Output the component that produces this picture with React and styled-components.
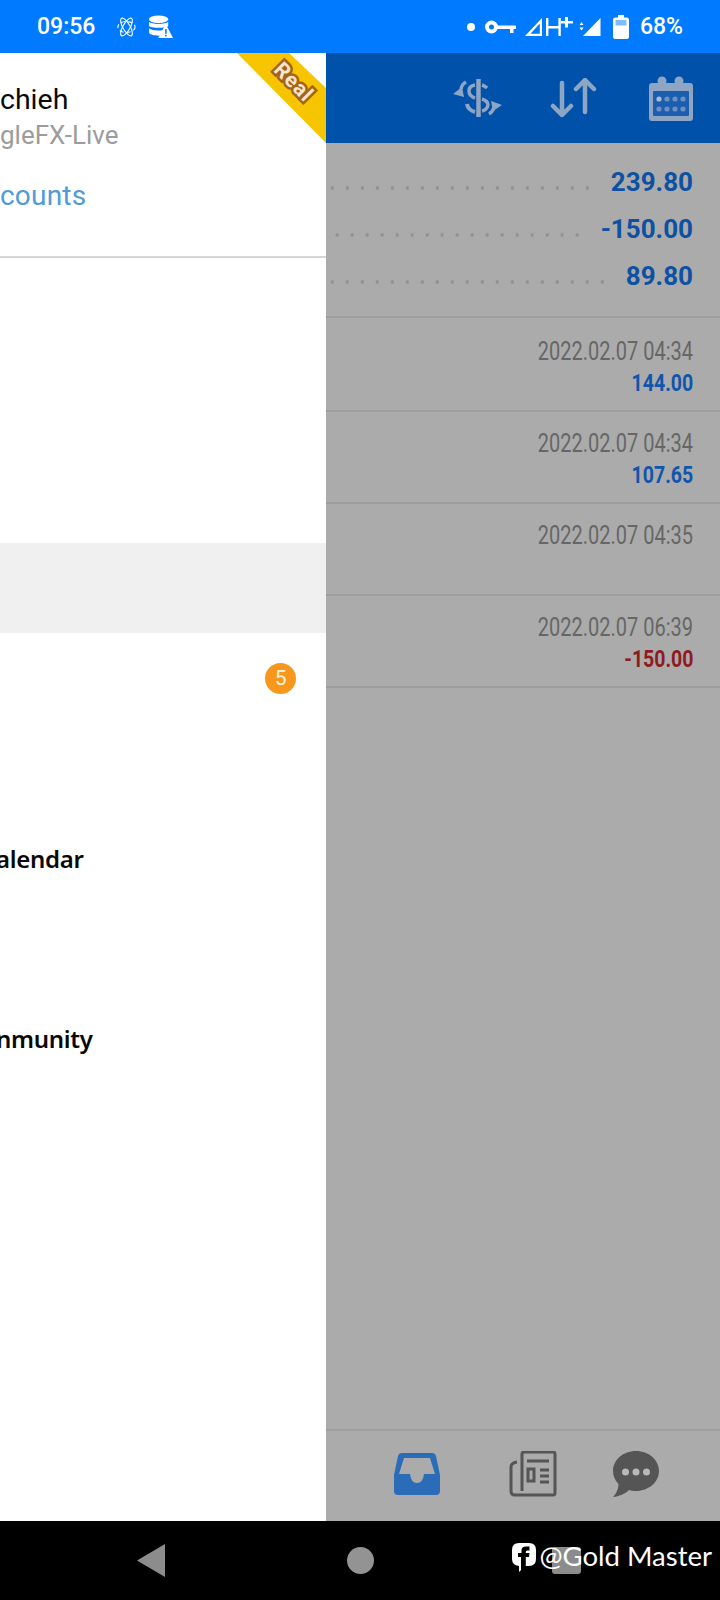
import React from "react"
import styled, { createGlobalStyle } from "styled-components"

const GlobalStyle = createGlobalStyle`
  html, body {
    margin: 0;
    padding: 0;
    background: #000;
    font-family: Roboto, "Liberation Sans", sans-serif;
  }
`

const Screen = styled.div`
  position: relative;
  width: 720px;
  height: 1600px;
  display: flex;
  flex-direction: column;
  overflow: hidden;
`

const StatusBar = styled.div`
  height: 53px;
  flex: none;
  background: #007aff;
  color: #fff;
  display: flex;
  align-items: center;
  justify-content: space-between;
  padding: 0 37px 0 37px;
  font-size: 23px;
  font-weight: 500;
`

const StatusGroup = styled.div`
  display: flex;
  align-items: center;
  gap: ${props => props.$gap}px;
  margin-left: ${props => props.$offset || 0}px;
`

const Main = styled.div`
  flex: 1;
  display: flex;
  min-height: 0;
`

const Drawer = styled.aside`
  position: relative;
  width: 326px;
  flex: none;
  background: #fff;
  overflow: hidden;
`

const Ribbon = styled.div`
  position: absolute;
  top: 0;
  right: 0;
  width: 89px;
  height: 90px;
  background: #f6c500;
  clip-path: polygon(0 0, 52px 0, 89px 35px, 89px 90px);
`

const RibbonText = styled.span`
  position: absolute;
  top: 17px;
  right: 9px;
  font-size: 21px;
  font-weight: 700;
  letter-spacing: 1px;
  color: #f8e6c8;
  -webkit-text-stroke: 5px #a4631c;
  paint-order: stroke fill;
  transform: rotate(45deg);
`

const Account = styled.div`
  height: 205px;
  box-sizing: border-box;
  padding-top: 30px;
  border-bottom: 2px solid #d6d6d6;
`

const UserName = styled.div`
  font-size: 28.5px;
  line-height: 34px;
  color: #0a0a0a;
`

const ServerName = styled.div`
  font-size: 26px;
  line-height: 36px;
  color: #9c9c9c;
`

const AccountsLink = styled.div`
  margin-top: 26px;
  font-size: 28px;
  line-height: 34px;
  letter-spacing: 0.2px;
  color: #509bd8;
`

const Menu = styled.div`
  padding-top: 285px;
`

const MenuItem = styled.div`
  height: 90px;
  display: flex;
  align-items: center;
  justify-content: space-between;
  padding: 0 30px 0 0;
  background: ${props => (props.$active ? "#f0f0f0" : "transparent")};
  font-family: "Noto Sans", sans-serif;
  font-size: 24px;
  font-weight: 600;
  letter-spacing: -0.3px;
  color: #080808;
`

const MenuLabel = styled.span`
  margin-left: -4px;
`

const Badge = styled.span`
  width: 31px;
  height: 31px;
  border-radius: 50%;
  background: #f7981d;
  color: #fff3dc;
  display: flex;
  align-items: center;
  justify-content: center;
  font-family: Roboto, sans-serif;
  font-size: 21px;
  font-weight: 400;
`

const Content = styled.main`
  flex: 1;
  display: flex;
  flex-direction: column;
  background: #ababab;
`

const Toolbar = styled.div`
  height: 90px;
  flex: none;
  background: #0051a9;
  display: flex;
  align-items: center;
  justify-content: flex-end;
  padding: 0 27px 0 0;
`

const ToolButton = styled.div`
  display: flex;
  margin-right: ${props => props.$gap}px;
`

const Summary = styled.section`
  height: 175px;
  flex: none;
  box-sizing: border-box;
  padding-top: 15px;
  border-bottom: 2px solid #9d9d9d;
`

const SummaryRow = styled.div`
  height: 47px;
  display: flex;
  align-items: center;
  gap: 16px;
  padding: 0 27px 0 2px;
`

const Leader = styled.div`
  flex: 1;
  height: 4px;
  margin-top: 12px;
  background: radial-gradient(circle, #929292 1.6px, transparent 2px) right center / 15px 4px repeat-x;
`

const SummaryValue = styled.span`
  font-size: 26px;
  font-weight: 700;
  color: #0e50a2;
`

const Trades = styled.div`
  padding-top: 2px;
`

const TradeRow = styled.div`
  height: 92px;
  box-sizing: border-box;
  padding: 16px 27px 0 0;
  border-bottom: 2px solid #9d9d9d;
  display: flex;
  flex-direction: column;
  align-items: flex-end;
`

const TradeDate = styled.div`
  font-size: 25px;
  line-height: 32px;
  color: #666;
  white-space: nowrap;
  transform: scaleX(0.8);
  transform-origin: right center;
`

const TradeProfit = styled.div`
  font-size: 23.5px;
  line-height: 30px;
  font-weight: 700;
  color: ${props => (props.$loss ? "#8f1b22" : "#0f56ac")};
  white-space: nowrap;
  transform: scaleX(0.83);
  transform-origin: right center;
`

const TabBar = styled.div`
  margin-top: auto;
  height: 92px;
  flex: none;
  box-sizing: border-box;
  border-top: 2px solid #9f9f9f;
  display: flex;
  align-items: center;
  padding: 0 0 4px 68px;
`

const Tab = styled.div`
  display: flex;
  margin-right: ${props => props.$gap}px;
`

const NavBar = styled.nav`
  height: 79px;
  flex: none;
  background: #000;
  display: flex;
  align-items: center;
  padding: 0 0 0 137px;
`

const NavCircle = styled.div`
  width: 27px;
  height: 27px;
  border-radius: 50%;
  background: #939393;
  margin-left: 182px;
`

const NavSquare = styled.div`
  width: 29px;
  height: 27px;
  border-radius: 3px;
  background: #8c8c8c;
  margin-left: 178px;
`

const Watermark = styled.div`
  position: absolute;
  right: 8px;
  bottom: 26px;
  display: flex;
  align-items: center;
  gap: 4px;
  color: #fff;
  font-family: Lato, sans-serif;
  font-size: 27.5px;
  line-height: 36px;
`

const FacebookMark = styled.svg`
  margin-top: 3px;
`

const AtomIcon = () => (
  <svg width="19" height="22" viewBox="0 0 19 22" fill="none" stroke="#fff" strokeWidth="1.1">
    <ellipse cx="9.5" cy="11" rx="3.6" ry="10" transform="rotate(30 9.5 11)" />
    <ellipse cx="9.5" cy="11" rx="3.6" ry="10" transform="rotate(-30 9.5 11)" />
    <ellipse cx="9.5" cy="11" rx="8.6" ry="5.5" strokeDasharray="4 3" />
  </svg>
)

const DatabaseIcon = () => (
  <svg width="24" height="24" viewBox="0 0 25 24" fill="#fff">
    <ellipse cx="10" cy="4" rx="10" ry="4" />
    <path d="M0 6.5C2 9.5 18 9.5 20 6.5V11C18 13.5 2 13.5 0 11ZM0 13C2 16 13 16 15 15L11 21C5 21 0 20 0 17.5Z" />
    <path d="M17.5 9L25 23.5H9.5Z" />
    <path d="M16.8 14h1.6v5h-1.6zM16.8 20h1.6v1.8h-1.6z" fill="#007aff" />
  </svg>
)

const KeyIcon = () => (
  <svg width="31" height="14" viewBox="0 0 31 14" fill="none">
    <circle cx="6.5" cy="7" r="4.5" stroke="#fff" strokeWidth="4" />
    <path d="M12 5.5H31V9H28.5V13H25V9H12Z" fill="#fff" />
  </svg>
)

const MobileSignal = () => (
  <svg width="48" height="22" viewBox="0 0 48 22" fill="#fff">
    <path d="M17 2V20H0ZM14.8 7.5 5.5 17.8H14.8Z" fillRule="evenodd" />
    <path d="M21 2h2.4v8h10v-8H35.8v18h-2.4v-7.6h-10V20H21Z" />
    <path d="M40 1h3v4h5v2.6h-5v4h-3v-4h-4V5h4Z" />
  </svg>
)

const SimSignal = () => (
  <svg width="22" height="20" viewBox="0 0 22 20" fill="#fff">
    <path d="M21.5 1V19H4Z" />
    <path d="M2.5 5 4.5 8H.5ZM.5 10.500H4.500L2.500 13.500Z" />
  </svg>
)

const BatteryIcon = () => (
  <svg width="16" height="24" viewBox="0 0 16 24">
    <path d="M5 0H11V2.500H13.500Q16 2.500 16 5V21.500Q16 24 13.500 24H2.500Q0 24 0 21.500V5Q0 2.500 2.500 2.500H5Z" fill="#fff" />
    <rect x="2.500" y="5" width="11" height="5.500" fill="#7fbcff" />
  </svg>
)

const ExchangeIcon = () => (
  <svg width="49" height="38" viewBox="0 0 49 38" fill="none" stroke="#8fa5c4" strokeWidth="3.500">
    <path d="M25.500 0V38" strokeWidth="4.500" />
    <path d="M22 6Q16 7 16 12Q16 17 22 19" />
    <path d="M29 20Q35 22 35 26Q34 31 29 32" />
    <path d="M14 25Q15 31 22 33" strokeWidth="4" />
    <path d="M29 6Q32 7 34 9" />
    <path d="M13 3Q9 5 8 10" />
    <path d="M0 15 9 8 11 18Z" fill="#8fa5c4" stroke="none" />
    <path d="M36 35Q40 33 41 28" />
    <path d="M49 26 38 22 40 32Z" fill="#8fa5c4" stroke="none" />
  </svg>
)

const SortIcon = () => (
  <svg width="48" height="40" viewBox="0 0 48 40" fill="none" stroke="#8fa5c4" strokeWidth="4.500" strokeLinecap="round" strokeLinejoin="round">
    <path d="M12 5V37M3 28 12 37 21 28" />
    <path d="M35 2V34M26 11 35 2 44 11" />
  </svg>
)

const CalendarIcon = () => (
  <svg width="44" height="45" viewBox="0 0 44 45">
    <rect x="0" y="7" width="44" height="38" rx="3" fill="#8fa5c4" />
    <circle cx="13" cy="5" r="4.500" fill="#8fa5c4" />
    <circle cx="30" cy="5" r="4.500" fill="#8fa5c4" />
    <rect x="4" y="15" width="36" height="25" rx="1" fill="#1b5eaf" />
    {[10, 18, 26, 34].map(x =>
      [23, 33].map(y => (
        <circle key={`${x}-${y}`} cx={x} cy={y} r="2.600" fill={x === 10 && y === 23 ? "#a9bad2" : "#6c90bf"} />
      ))
    )}
  </svg>
)

const InboxIcon = () => (
  <svg width="46" height="42" viewBox="0 0 46 42">
    <path
      fillRule="evenodd"
      fill="#2b6cb9"
      d="M8 0H38Q41 0 42 3L46 22V38Q46 42 42 42H4Q0 42 0 38V22L4 3Q5 0 8 0ZM10 5 5 21H16Q17 30 23 30Q29 30 30 21H41L36 5Z"
    />
  </svg>
)

const NewsIcon = () => (
  <svg width="48" height="46" viewBox="0 0 48 46" fill="none" stroke="#555" strokeWidth="3">
    <path d="M15 44H44Q46 44 46 42V3Q46 1 44 1H15Q13 1 13 3V40" />
    <path d="M8 11Q2 12 2 16V40Q2 44 6 44H15" />
    <path d="M18 10H40M31 19H40M31 25H40M31 31H40" />
    <rect x="19" y="18" width="6" height="12" />
  </svg>
)

const ChatIcon = () => (
  <svg width="46" height="46" viewBox="0 0 46 46">
    <path d="M23 0C35.700 0 46 8.800 46 20C46 31.200 35.700 40 23 40C20.500 40 18 39.600 16 39C12 43 6 45.500 0 46C3 43 5.500 38 5.500 33C2 29.500 0 25 0 20C0 8.800 10.300 0 23 0Z" fill="#555" />
    <circle cx="12.500" cy="21" r="3.500" fill="#b8b8b8" />
    <circle cx="23" cy="21" r="3.500" fill="#b8b8b8" />
    <circle cx="33.500" cy="21" r="3.500" fill="#b8b8b8" />
  </svg>
)

const BackIcon = () => (
  <svg width="28" height="33" viewBox="0 0 28 33">
    <path d="M0 16.500 28 0V33Z" fill="#8c8c8c" />
  </svg>
)

const FacebookIcon = () => (
  <FacebookMark width="24" height="29" viewBox="0 0 24 29">
    <path d="M7 0H17Q24 0 24 7V16Q24 23 17 23H13L7 29V23Q0 22 0 16V7Q0 0 7 0Z" fill="#fff" />
    <path d="M9 29V14H6V10H9.500V7.500Q9.500 3.500 14 3.500H17.500V7.500H15Q13.800 7.500 13.800 9V10H17.500L17 14H13.800V24Z" fill="#000" />
  </FacebookMark>
)

const summary = [
  { id: "profit", value: "239.80" },
  { id: "loss", value: "-150.00" },
  { id: "total", value: "89.80" },
]

const trades = [
  { date: "2022.02.07 04:34", profit: "144.00" },
  { date: "2022.02.07 04:34", profit: "107.65" },
  { date: "2022.02.07 04:35" },
  { date: "2022.02.07 06:39", profit: "-150.00", loss: true },
]

const App = () => {
  return (
    <Screen>
      <GlobalStyle />
      <StatusBar>
        <StatusGroup $gap={22}>
          <span>09:56</span>
          <StatusGroup $gap={13}>
            <AtomIcon />
            <DatabaseIcon />
          </StatusGroup>
        </StatusGroup>
        <StatusGroup $gap={9}>
          <svg width="10" height="10" viewBox="0 0 10 10"><circle cx="5" cy="5" r="4" fill="#fff" /></svg>
          <KeyIcon />
          <MobileSignal />
          <StatusGroup $gap={0} $offset={-3}>
            <SimSignal />
          </StatusGroup>
          <StatusGroup $gap={11} $offset={3}>
            <BatteryIcon />
            <span>68%</span>
          </StatusGroup>
        </StatusGroup>
      </StatusBar>

      <Main>
        <Drawer>
          <Ribbon>
            <RibbonText>Real</RibbonText>
          </Ribbon>
          <Account>
            <UserName>chieh</UserName>
            <ServerName>gleFX-Live</ServerName>
            <AccountsLink>counts</AccountsLink>
          </Account>
          <Menu>
            <MenuItem $active />
            <MenuItem>
              <span />
              <Badge>5</Badge>
            </MenuItem>
            <MenuItem />
            <MenuItem><MenuLabel>alendar</MenuLabel></MenuItem>
            <MenuItem />
            <MenuItem><MenuLabel>nmunity</MenuLabel></MenuItem>
          </Menu>
        </Drawer>

        <Content>
          <Toolbar>
            <ToolButton $gap={48}><ExchangeIcon /></ToolButton>
            <ToolButton $gap={51}><SortIcon /></ToolButton>
            <ToolButton $gap={0}><CalendarIcon /></ToolButton>
          </Toolbar>
          <Summary>
            {summary.map(row => (
              <SummaryRow key={row.id}>
                <Leader />
                <SummaryValue>{row.value}</SummaryValue>
              </SummaryRow>
            ))}
          </Summary>
          <Trades>
            {trades.map((trade, i) => (
              <TradeRow key={i}>
                <TradeDate>{trade.date}</TradeDate>
                {trade.profit && <TradeProfit $loss={trade.loss}>{trade.profit}</TradeProfit>}
              </TradeRow>
            ))}
          </Trades>
          <TabBar>
            <Tab $gap={69}><InboxIcon /></Tab>
            <Tab $gap={56}><NewsIcon /></Tab>
            <Tab $gap={0}><ChatIcon /></Tab>
          </TabBar>
        </Content>
      </Main>

      <NavBar>
        <BackIcon />
        <NavCircle />
        <NavSquare />
      </NavBar>
      <Watermark>
        <FacebookIcon />
        <span>@Gold Master</span>
      </Watermark>
    </Screen>
  )
}

export default App
